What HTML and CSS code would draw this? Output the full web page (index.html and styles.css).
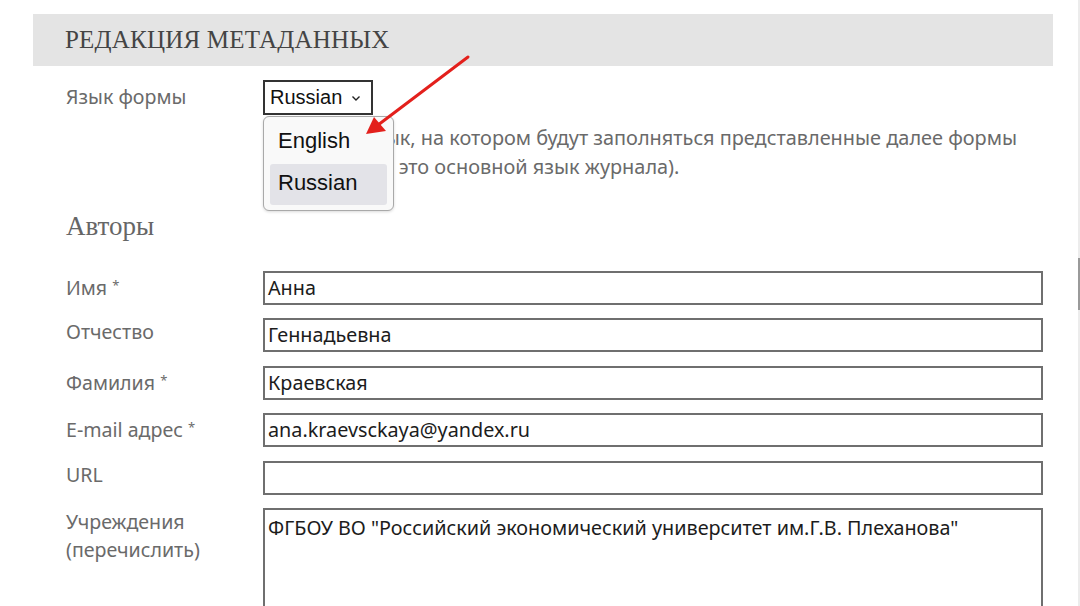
FILE: index.html
```html
<!DOCTYPE html>
<html lang="ru">
  <head>
    <meta charset="UTF-8" />
    <meta name="viewport" content="width=device-width, initial-scale=1.0" />
    <title>Редакция метаданных</title>
    <link rel="stylesheet" href="styles.css">
  </head>
  <body>
    <div class="screen">
      <div class="page">
        <div class="section-head">
          <h1>РЕДАКЦИЯ МЕТАДАННЫХ</h1>
        </div>

        <div class="field lang-row">
          <div class="label">Язык формы</div>
          <div class="lang-col">
            <div class="select-wrap">
              <div class="select">
                <span>Russian</span>
                <svg class="chevron" width="10" height="7" viewBox="0 0 10 7">
                  <path d="M1.5 1.5 L5 5 L8.5 1.5" fill="none" stroke="#222" stroke-width="1.4" />
                </svg>
              </div>
              <!-- opened dropdown list -->
              <div class="dropdown">
                <div class="option">English</div>
                <div class="option selected">Russian</div>
              </div>
            </div>
            <p class="help">Выберите язык, на котором будут заполняться представленные далее формы<br />(как правило, это основной язык журнала).</p>
          </div>
        </div>

        <h2 class="sub-head">Авторы</h2>

        <div class="field">
          <div class="label">Имя <span class="req">*</span></div>
          <div class="input">Анна</div>
        </div>
        <div class="field">
          <div class="label">Отчество</div>
          <div class="input">Геннадьевна</div>
        </div>
        <div class="field">
          <div class="label">Фамилия <span class="req">*</span></div>
          <div class="input">Краевская</div>
        </div>
        <div class="field">
          <div class="label">E-mail адрес <span class="req">*</span></div>
          <div class="input">ana.kraevsckaya@yandex.ru</div>
        </div>
        <div class="field">
          <div class="label">URL</div>
          <div class="input"></div>
        </div>
        <div class="field">
          <div class="label">Учреждения<br />(перечислить)</div>
          <div class="input textarea">ФГБОУ ВО "Российский экономический университет им.Г.В. Плеханова"</div>
        </div>
      </div>
      <div class="edge"><div class="edge-thumb"></div></div>
    </div>

    <!-- red pointer arrow drawn on top of the screenshot -->
    <svg class="pointer" width="1080" height="606" viewBox="0 0 1080 606">
      <line x1="468" y1="57" x2="378" y2="125" stroke="#e3201c" stroke-width="3" stroke-linecap="round" />
      <polygon points="366,134 374,117 386,131" fill="#e3201c" />
    </svg>
  </body>
</html>
```

FILE: styles.css
```css
body {
  margin: 0;
  background-color: #fff;
  font-family: "Noto Sans", "DejaVu Sans", sans-serif;
  overflow: hidden;
}
.screen {
  display: flex;
  height: 606px;
}
.page {
  flex: 1;
  padding: 14px 25px 0 33px;
}
.edge {
  width: 2px;
  background-color: #ececec;
  padding-top: 258px;
}
.edge-thumb {
  height: 52px;
  background-color: #9a9a9a;
}
.section-head {
  background-color: #e4e4e4;
  height: 52px;
  padding-left: 32px;
  display: flex;
  align-items: center;
}
h1 {
  margin: 0;
  font-family: "Liberation Serif", "DejaVu Serif", serif;
  font-weight: normal;
  font-size: 25px;
  color: #444;
  letter-spacing: 0.2px;
}
.field {
  display: grid;
  grid-template-columns: 197px 780px;
  margin-left: 33px;
  margin-bottom: 13.6px;
}
.label {
  font-size: 19.6px;
  line-height: 28px;
  color: #6a6a6a;
}
.req {
  font-size: 13px;
  vertical-align: 5px;
}
.lang-row {
  margin-top: 14px;
}
.lang-row .label {
  padding-top: 3px;
}
.lang-col {
  display: flex;
  flex-direction: column;
}
.select-wrap {
  position: relative;
  width: 110px;
}
.select {
  box-sizing: border-box;
  width: 110px;
  height: 35px;
  border: 2px solid #333;
  display: flex;
  align-items: center;
  gap: 9px;
  padding-left: 5px;
  font-family: "Liberation Sans", Arial, sans-serif;
  font-size: 20px;
  color: #111;
}
.chevron {
  margin-top: 2px;
}
.dropdown {
  position: absolute;
  top: 36px;
  left: 0;
  box-sizing: border-box;
  width: 131px;
  height: 95px;
  padding: 5px 6px;
  background-color: #f9f9f9;
  border: 1px solid #a9a9a9;
  border-radius: 6px;
  box-shadow: 0 1px 3px rgba(0, 0, 0, 0.15);
  font-family: "Liberation Sans", Arial, sans-serif;
  font-size: 22px;
  color: #111;
}
.option {
  height: 41px;
  line-height: 38px;
  padding-left: 8px;
  border-radius: 3px;
}
.option.selected {
  margin-top: 1px;
  background-color: #e3e3e8;
}
.help {
  margin: 8px 0 0 0;
  font-size: 19.9px;
  line-height: 29px;
  color: #6a6a6a;
  white-space: nowrap;
}
.sub-head {
  margin: 29.5px 0 30px 33px;
  font-family: "Liberation Serif", "DejaVu Serif", serif;
  font-weight: normal;
  font-size: 27px;
  line-height: 30px;
  color: #666;
}
.input {
  box-sizing: border-box;
  height: 34px;
  border: 2px solid #6f6f6f;
  padding: 0 3px;
  font-size: 19.8px;
  line-height: 30px;
  color: #1c1c1c;
}
.input.textarea {
  height: 120px;
  padding-top: 3px;
}
.pointer {
  position: absolute;
  left: 0;
  top: 0;
  pointer-events: none;
}
```
